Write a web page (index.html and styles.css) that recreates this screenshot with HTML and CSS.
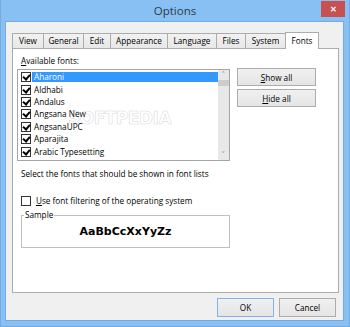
FILE: index.html
```html
<!DOCTYPE html>
<html lang="en">
<head>
	<meta charset="UTF-8">
	<title>Options</title>
	<link rel="stylesheet" href="styles.css">
</head>
<body>
	<div class="window">
		<div class="titlebar">
			<span></span>
			<span class="title">Options</span>
			<span class="close">&#x2715;</span>
		</div>
		<div class="client">
			<div class="tabs">
				<div class="tab tab-view">View</div>
				<div class="tab tab-general">General</div>
				<div class="tab tab-edit">Edit</div>
				<div class="tab tab-appearance">Appearance</div>
				<div class="tab tab-language">Language</div>
				<div class="tab tab-files">Files</div>
				<div class="tab tab-system">System</div>
				<div class="tab tab-fonts active">Fonts</div>
			</div>
			<div class="panel">
				<div class="label"><u>A</u>vailable fonts:</div>
				<div class="fonts-row">
					<div class="listbox">
						<ul class="items">
							<li class="item selected"><span class="check on"></span><span class="name">Aharoni</span></li>
							<li class="item"><span class="check on"></span><span class="name">Aldhabi</span></li>
							<li class="item"><span class="check on"></span><span class="name">Andalus</span></li>
							<li class="item"><span class="check on"></span><span class="name">Angsana New</span></li>
							<li class="item"><span class="check on"></span><span class="name">AngsanaUPC</span></li>
							<li class="item"><span class="check on"></span><span class="name">Aparajita</span></li>
							<li class="item"><span class="check on"></span><span class="name">Arabic Typesetting</span></li>
						</ul>
						<div class="scrollbar">
							<span class="arrow">&#x2C4;</span>
							<span class="thumb"></span>
							<span class="track"></span>
							<span class="arrow">&#x2C5;</span>
						</div>
						<span class="watermark">SOFTPEDIA</span>
					</div>
					<div class="side-buttons">
						<button class="btn side"><u>S</u>how all</button>
						<button class="btn side"><u>H</u>ide all</button>
					</div>
				</div>
				<p class="hint">Select the fonts that should be shown in font lists</p>
				<div class="filter"><span class="check"></span><span><u>U</u>se font filtering of the operating system</span></div>
				<fieldset class="sample">
					<legend>Sample</legend>
					<div class="sample-text">AaBbCcXxYyZz</div>
				</fieldset>
			</div>
			<div class="dialog-buttons">
				<button class="btn dlg default">OK</button>
				<button class="btn dlg">Cancel</button>
			</div>
		</div>
	</div>
</body>
</html>
```

FILE: styles.css
```css
* {
	box-sizing: border-box;
}
body {
	margin: 0;
	background-color: #89c0f3;
	font-family: "Open Sans", "Noto Sans", sans-serif;
	font-size: 8.2px;
	color: #000;
}
.window {
	width: 350px;
	height: 327px;
	border: 1px solid #74abe0;
	border-top: none;
}
.titlebar {
	display: grid;
	grid-template-columns: 1fr auto 1fr;
	height: 21px;
}
.title {
	padding-top: 3px;
	font-size: 11.5px;
	color: #2e3b48;
}
.close {
	justify-self: end;
	width: 24px;
	height: 16px;
	margin: 1px 4px 0 0;
	background-color: #c75050;
	color: #fff;
	font-size: 8px;
	font-weight: bold;
	line-height: 16px;
	text-align: center;
}
.client {
	width: 339px;
	height: 300px;
	margin-left: 4px;
	padding: 10px 0 0 6px;
	background-color: #f0f0f0;
	border: 1px solid #74abe0;
}

/* tabs */
.tabs {
	display: flex;
	align-items: flex-end;
	height: 16px;
}
.tab {
	height: 15px;
	border-top: 1px solid #acacac;
	border-left: 1px solid #acacac;
	background: linear-gradient(#f2f2f2, #e7e7e7);
	text-align: center;
	line-height: 13px;
}
.tab-view { width: 31px; }
.tab-general { width: 40px; }
.tab-edit { width: 27px; }
.tab-appearance { width: 57px; }
.tab-language { width: 49px; }
.tab-files { width: 29px; }
.tab-system { width: 40px; }
.tab.active {
	position: relative;
	z-index: 1;
	width: 34px;
	height: 17px;
	margin-bottom: -1px;
	border-right: 1px solid #acacac;
	background: #fff;
	line-height: 15px;
}
.panel {
	width: 327px;
	height: 245px;
	padding: 0 4px;
	background-color: #fff;
	border: 1px solid #acacac;
}
.label {
	margin: 6px 0 0 4px;
	line-height: 11px;
}

/* font list */
.fonts-row {
	display: flex;
	gap: 7px;
	margin-top: 2px;
}
.listbox {
	position: relative;
	display: flex;
	width: 213px;
	height: 92px;
	margin-top: 1px;
	border: 1px solid #a5a5a5;
}
.items {
	flex: 1;
	margin: 0;
	padding: 1px 0 0;
	list-style: none;
}
.item {
	display: flex;
	align-items: center;
	height: 12.4px;
	padding-left: 3px;
}
.name {
	flex: 1;
	height: 10px;
	margin-left: 1px;
	padding-left: 2px;
	line-height: 10px;
	white-space: nowrap;
}
.item.selected .name {
	background-color: #3399ff;
	color: #fff;
}
.check {
	position: relative;
	width: 10px;
	height: 10px;
	border: 1px solid #333;
	background-color: #fff;
}
.check.on::after {
	content: "";
	position: absolute;
	left: 2px;
	top: 0;
	width: 3px;
	height: 5px;
	border: solid #000;
	border-width: 0 2px 2px 0;
	transform: rotate(40deg);
}
.scrollbar {
	display: flex;
	flex-direction: column;
	width: 11px;
	background-color: #e8e8e8;
}
.arrow {
	height: 10px;
	font-size: 8px;
	line-height: 10px;
	text-align: center;
	color: #606060;
}
.thumb {
	height: 6px;
	background-color: #cdcdcd;
}
.track {
	flex: 1;
}
.watermark {
	position: absolute;
	left: 50px;
	top: 38px;
	font-family: "DejaVu Sans", sans-serif;
	font-size: 17px;
	font-weight: bold;
	letter-spacing: -0.5px;
	color: transparent;
	-webkit-text-stroke: 0.6px rgba(170, 170, 170, 0.45);
	pointer-events: none;
}
.side-buttons {
	display: flex;
	flex-direction: column;
	gap: 3px;
}
.btn {
	padding: 0;
	border: 1px solid #acacac;
	background: linear-gradient(#f0f0f0, #e5e5e5);
	font-family: inherit;
	font-size: 8.2px;
	color: #000;
}
.btn.side {
	width: 79px;
	height: 18px;
}
.hint {
	margin: 7px 0 0 4px;
	line-height: 11px;
}
.filter {
	display: flex;
	align-items: center;
	gap: 5px;
	margin: 16px 0 0 4px;
	line-height: 11px;
}
.sample {
	width: 209px;
	height: 38px;
	margin: 4px 0 0 4px;
	padding: 0;
	border: 1px solid #c0c0c0;
}
.sample legend {
	margin-left: 2px;
	padding: 0 1px;
	line-height: 10px;
}
.sample-text {
	font-family: "DejaVu Sans", sans-serif;
	font-size: 11px;
	font-weight: bold;
	line-height: 24px;
	text-align: center;
}

/* dialog buttons */
.dialog-buttons {
	display: flex;
	justify-content: flex-end;
	gap: 5px;
	margin-top: 5px;
	padding-right: 7px;
}
.btn.dlg {
	width: 57px;
	height: 19px;
}
.btn.default {
	border-color: #7eb4ea;
}
```
